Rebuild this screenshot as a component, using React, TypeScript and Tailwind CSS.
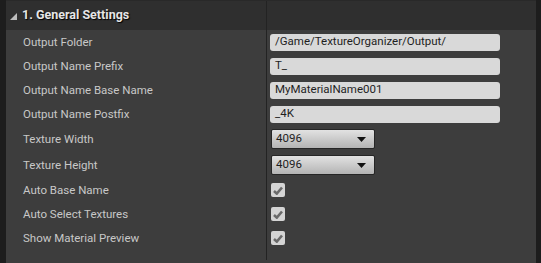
const font = { fontFamily: "Roboto, 'Liberation Sans', sans-serif" }

function Row({ label, h = "h-[24px]", children }: { label: string; h?: string; children?: React.ReactNode }) {
  return (
    <div className={`flex ${h}`}>
      <div className="w-[261px] shrink-0 border-r border-[#232323] flex items-center pl-[17px] pt-[1px] text-[11.5px] text-[#c8c8c8]">
        {label}
      </div>
      <div className="flex-1 flex items-center">{children}</div>
    </div>
  )
}

function TextBox({ value }: { value: string }) {
  return (
    <div className="ml-[3px] w-[230px] h-[17px] rounded-[3px] bg-[#d9d9d9] flex items-center pl-[5px] text-[11.5px] text-[#1e1e1e]">
      {value}
    </div>
  )
}

function Combo({ value }: { value: string }) {
  return (
    <div className="ml-[4px] w-[104px] h-[20px] rounded-[2px] border border-[#262626] bg-gradient-to-b from-[#e2e2e2] to-[#b4b4b4] flex items-center justify-between pl-[4px] pr-[8px] text-[11.5px] text-[#1e1e1e]">
      <span>{value}</span>
      <svg width="9" height="5" viewBox="0 0 9 5">
        <path d="M0 0H9L4.5 5Z" fill="#111" />
      </svg>
    </div>
  )
}

function Check() {
  return (
    <div className="ml-[4px] w-[14px] h-[14px] rounded-[2px] bg-[#d4d4d4] flex items-center justify-center">
      <svg width="10" height="9" viewBox="0 0 10 9">
        <path d="M1 5L3.8 7.6L9 1.5" stroke="#6a6a6a" strokeWidth="2.6" fill="none" />
      </svg>
    </div>
  )
}

export default function App() {
  return (
    <div className="w-[541px] h-[263px] flex bg-[#1d1d1d] overflow-hidden" style={font}>
      <div className="w-[6px] shrink-0" />
      <div className="flex-1 bg-[#3d3d3d] flex flex-col">
        <div className="flex h-[30px] bg-[#2f2f2f] border-t border-[#292929]">
          <div className="w-[261px] shrink-0 border-r border-[#232323] flex items-center pl-[4px]">
            <svg width="8" height="8" viewBox="0 0 8 8" className="mt-[2px]">
              <path d="M0 7H7V0Z" fill="#bdbdbd" />
            </svg>
            <span className="ml-[4px] text-[12.5px] font-bold text-[#e6e6e6] [text-shadow:1px_1px_1px_#000]">
              1. General Settings
            </span>
          </div>
          <div className="flex-1" />
        </div>
        <Row label="Output Folder"><TextBox value="/Game/TextureOrganizer/Output/" /></Row>
        <Row label="Output Name Prefix"><TextBox value="T_" /></Row>
        <Row label="Output Name Base Name"><TextBox value="MyMaterialName001" /></Row>
        <Row label="Output Name Postfix"><TextBox value="_4K" /></Row>
        <Row label="Texture Width" h="h-[26px]"><Combo value="4096" /></Row>
        <Row label="Texture Height" h="h-[26px]"><Combo value="4096" /></Row>
        <Row label="Auto Base Name"><Check /></Row>
        <Row label="Auto Select Textures"><Check /></Row>
        <Row label="Show Material Preview"><Check /></Row>
        <div className="flex h-[10px]">
          <div className="w-[261px] shrink-0 border-r border-[#232323]" />
        </div>
      </div>
      <div className="w-[5px] shrink-0" />
    </div>
  )
}
